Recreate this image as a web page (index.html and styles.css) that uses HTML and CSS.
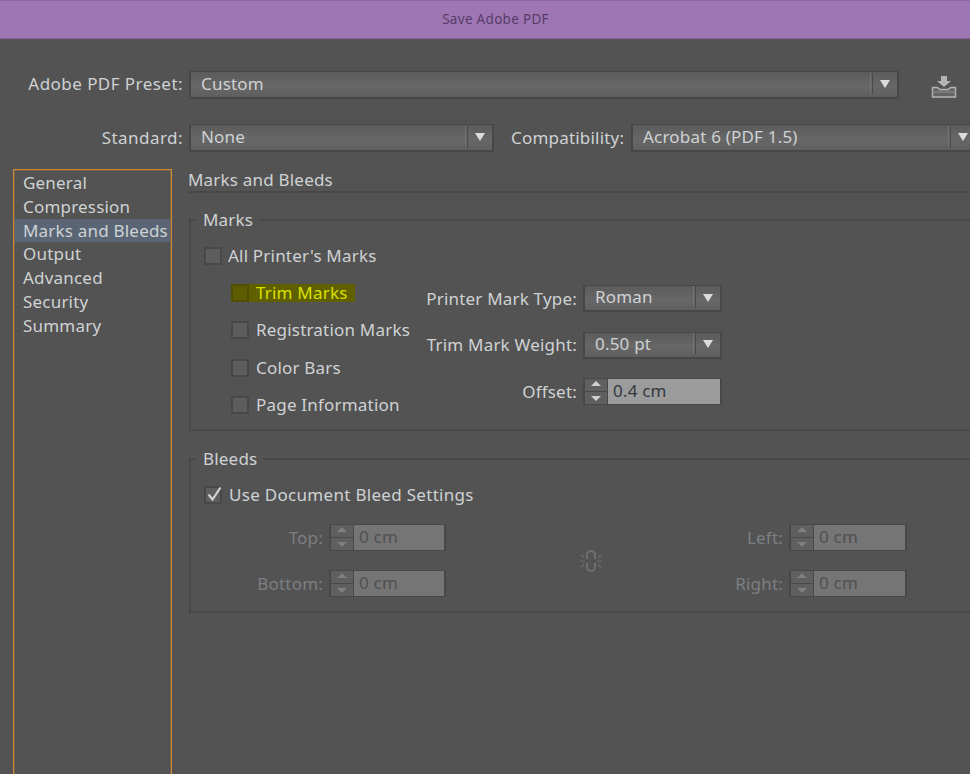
FILE: index.html
```html
<!DOCTYPE html>
<html lang="en">
<head>
<meta charset="utf-8">
<title>Save Adobe PDF</title>
<link rel="stylesheet" href="styles.css">
</head>
<body>
<div class="dialog">
  <header class="titlebar">Save Adobe PDF</header>
  <div class="row row-preset">
    <label class="lbl lbl-first">Adobe PDF Preset:</label>
    <div class="select select-preset"><span>Custom</span><i class="sep"></i><i class="arrow"></i></div>
    <svg class="save-icon" width="26" height="24" viewBox="0 0 26 24"><path d="M10 1h6v5h4l-7 6-7-6h4z" fill="#b4b4b4"/><path d="M1.500 12.500h5l2 2h9l2-2h5v9.500h-23z" fill="#666" stroke="#b4b4b4" stroke-width="1.500" stroke-linejoin="round"/><path d="M1 17h24" stroke="#8c8c8c"/></svg>
  </div>
  <div class="row row-standard">
    <label class="lbl lbl-first">Standard:</label>
    <div class="select select-standard"><span>None</span><i class="sep"></i><i class="arrow"></i></div>
    <label class="lbl lbl-compat">Compatibility:</label>
    <div class="select select-compat"><span>Acrobat 6 (PDF 1.5)</span><i class="sep"></i><i class="arrow"></i></div>
  </div>
  <div class="main">
    <nav class="nav">
      <div class="nav-item">General</div>
      <div class="nav-item">Compression</div>
      <div class="nav-item active">Marks and Bleeds</div>
      <div class="nav-item">Output</div>
      <div class="nav-item">Advanced</div>
      <div class="nav-item">Security</div>
      <div class="nav-item">Summary</div>
    </nav>
    <section class="panel">
      <h2 class="panel-title">Marks and Bleeds</h2>
      <div class="group group-marks">
        <div class="legend">Marks</div>
        <div class="check all"><i class="box"></i><span>All Printer's Marks</span></div>
        <div class="marks-body">
          <div class="marks-list">
            <div class="check highlighted"><i class="box"></i><span>Trim Marks</span></div>
            <div class="check"><i class="box"></i><span>Registration Marks</span></div>
            <div class="check"><i class="box"></i><span>Color Bars</span></div>
            <div class="check"><i class="box"></i><span>Page Information</span></div>
          </div>
          <div class="marks-form">
            <label class="lbl">Printer Mark Type:</label>
            <div class="select select-small"><span>Roman</span><i class="sep"></i><i class="arrow"></i></div>
            <label class="lbl">Trim Mark Weight:</label>
            <div class="select select-small"><span>0.50 pt</span><i class="sep"></i><i class="arrow"></i></div>
            <label class="lbl">Offset:</label>
            <div class="spin spin-active"><div class="spin-btns"><i class="up"></i><i class="down"></i></div><span class="spin-val">0.4 cm</span></div>
          </div>
        </div>
      </div>
      <div class="group group-bleeds">
        <div class="legend">Bleeds</div>
        <div class="check use-doc"><i class="box"><svg width="19" height="19" viewBox="0 0 19 19"><path d="M3.500 9.500l4 5 8-12" fill="none" stroke="#d4d4d4" stroke-width="2.200"/></svg></i><span>Use Document Bleed Settings</span></div>
        <div class="bleeds-form">
          <div class="bleed-col bleed-left">
            <label class="lbl dim">Top:</label>
            <div class="spin"><div class="spin-btns"><i class="up"></i><i class="down"></i></div><span class="spin-val">0 cm</span></div>
            <label class="lbl dim">Bottom:</label>
            <div class="spin"><div class="spin-btns"><i class="up"></i><i class="down"></i></div><span class="spin-val">0 cm</span></div>
          </div>
          <svg class="link" width="26" height="24" viewBox="0 0 26 24" fill="none" stroke="#6f6f6f" stroke-width="2"><path d="M9 10V6a4 4 0 0 1 8 0v4M9 14v4a4 4 0 0 0 8 0v-4"/><path d="M2 12h5M19 12h5M3 6l3 2.500M23 6l-3 2.500M3 18l3-2.500M23 18l-3-2.500" stroke-width="1.200"/></svg>
          <div class="bleed-col bleed-right">
            <label class="lbl dim">Left:</label>
            <div class="spin spin-wide"><div class="spin-btns"><i class="up"></i><i class="down"></i></div><span class="spin-val">0 cm</span></div>
            <label class="lbl dim">Right:</label>
            <div class="spin spin-wide"><div class="spin-btns"><i class="up"></i><i class="down"></i></div><span class="spin-val">0 cm</span></div>
          </div>
        </div>
      </div>
    </section>
  </div>
</div>
</body>
</html>
```
FILE: styles.css
```css
* { box-sizing: border-box; }
html, body { margin: 0; height: 100%; overflow: hidden; }
body { background: #535353; }
.dialog {
  width: 970px; height: 774px; overflow: hidden;
  font: 17px/20px "Noto Sans", sans-serif; letter-spacing: .2px;
  color: #cfd2d4;
}
.titlebar {
  height: 39px; background: #9e76b4;
  border-top: 1px solid #8d66a4; border-bottom: 1px solid #84609a;
  text-align: center; color: #563c68; padding-left: 21px;
  font-size: 13.500px; line-height: 36px; letter-spacing: .3px;
}
.row { display: flex; align-items: center; }
.row-preset { margin-top: 32px; height: 28px; }
.row-preset .lbl { margin-top: -2px; }
.row-standard { margin-top: 25px; height: 28px; width: 1000px; }
.lbl { text-align: right; white-space: nowrap; }
.lbl-first { width: 183px; flex: none; letter-spacing: .45px; }
.lbl-compat { margin-left: 17px; width: 113px; flex: none; }
.select {
  display: flex; align-items: center; height: 28px; flex: none;
  background: linear-gradient(#5b5b5b, #676767 55%, #5f5f5f);
  border: 2px solid #474747; border-top-width: 1px; padding-left: 10px;
  color: #cfd2d4;
}
.select span { flex: 1; margin-top: -2px; }
.sep { width: 3px; height: 21px; margin-top: -3px; border-left: 1px solid #727272; border-right: 1px solid #4a4a4a; }
.arrow {
  width: 0; height: 0; margin: -1px 7px 0 7px;
  border: 5px solid transparent; border-top: 8px solid #dcdcdc; border-bottom: 0;
}
.select-preset { width: 710px; margin-left: 6px; }
.save-icon { margin-left: 32px; margin-top: 3px; flex: none; }
.select-standard { width: 305px; margin-left: 6px; }
.select-compat { width: 346px; margin-left: 7px; }
.select-small { width: 139px; height: 27px; }
.main { display: flex; margin-top: 17px; }
.nav {
  width: 159px; height: 620px; margin-left: 13px; flex: none;
  border: 1px solid #d08a35; box-shadow: inset 0 0 0 1px rgba(200, 135, 60, .3);
  padding: 1px 1px 0 1px;
}
.nav-item { height: 23.800px; line-height: 23px; padding-left: 8px; white-space: nowrap; }
.nav-item.active { background: #5a6675; }
.panel { margin-left: 16px; width: 800px; flex: none; }
.panel-title {
  font: inherit; margin: 0 0 26px; height: 24px; line-height: 22px;
  border-bottom: 2px solid #484848;
}
.group { border: 2px solid #484848; border-right: 0; position: relative; margin-left: 1px; }
.legend {
  position: absolute; left: 4px; top: -12px; padding: 0 6px 0 8px;
  background: #535353; line-height: 22px;
}
.group-marks { height: 212px; padding: 26px 0 0 13px; }
.check { display: flex; align-items: center; height: 18px; }
.box {
  display: block; flex: none; width: 18px; height: 18px; position: relative;
  background: #5d5d5d; border: 2px solid #484848;
}
.box svg { position: absolute; left: -1px; top: -3px; }
.check span { margin-left: 7px; }
.check.all span { margin-left: 6px; }
.use-doc span { letter-spacing: .3px; }
.marks-body { display: flex; margin-top: 19px; }
.marks-list { margin-left: 27px; width: 193px; flex: none; display: flex; flex-direction: column; gap: 19.400px; }
.check.highlighted { background: #606000; width: 124px; color: #d8e000; }
.highlighted .box { background: #5c5c00; border-color: #4f4f00; }
.marks-form {
  display: grid; grid-template-columns: 152px 139px; column-gap: 6px;
  grid-auto-rows: 27px; row-gap: 19.500px; align-items: center; margin-left: 1px; margin-top: 1px;
}
.spin { display: flex; width: 117px; height: 27px; border: 2px solid #484848; border-top-width: 1px; border-bottom-width: 1px; background: #757575; flex: none; }
.spin-active { width: 139px; background: #9c9c9c; }
.spin-wide { width: 118px; }
.spin-active .spin-val { color: #34383c; }
.spin-btns { width: 23px; flex: none; display: flex; flex-direction: column; background: #5f5f5f; border-right: 1px solid #484848; }
.spin-btns i { flex: 1; position: relative; display: block; }
.spin-btns .up { border-bottom: 1px solid #484848; }
.spin-btns .up::after, .spin-btns .down::after { content: ""; position: absolute; left: 6px; width: 0; height: 0; border: 5px solid transparent; }
.spin-btns .up::after { top: 2px; border-top: 0; border-bottom: 5px solid #d0d0d0; }
.spin-btns .down::after { top: 4px; border-bottom: 0; border-top: 5px solid #d0d0d0; }
.spin:not(.spin-active) .up::after { border-bottom-color: #7f7f7f; }
.spin:not(.spin-active) .down::after { border-top-color: #7f7f7f; }
.spin-val { padding-left: 5px; line-height: 23px; color: #505050; }
.group-bleeds { margin-top: 27px; height: 155px; padding: 26px 0 0 13px; }
.bleeds-form { display: flex; align-items: center; margin-top: 20px; height: 73px; }
.bleed-col { display: grid; column-gap: 6px; row-gap: 19px; grid-auto-rows: 27px; align-items: center; flex: none; }
.bleed-left { width: 256px; grid-template-columns: 133px 117px; margin-left: -14px; }
.bleed-right { width: 251px; grid-template-columns: 127px 118px; margin-left: 52px; }
.link { margin-left: 132px; flex: none; }
.dim { color: #7c7f82; }
```
